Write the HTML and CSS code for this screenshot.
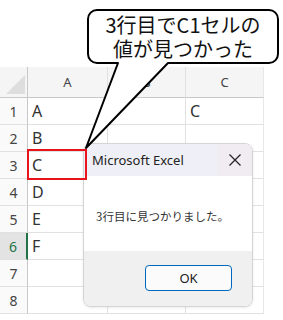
FILE: index.html
```html
<!DOCTYPE html>
<html lang="ja">
<head>
  <meta charset="UTF-8">
  <title>Excel search</title>
  <link rel="stylesheet" href="styles.css">
</head>
<body>
  <!-- Sheet -->
  <div class="sheet">
    <div class="cell corner"><span class="tri"></span></div>
    <div class="cell colh">A</div>
    <div class="cell colh">B</div>
    <div class="cell colh last">C</div>

    <div class="cell rowh">1</div><div class="cell">A</div><div class="cell"></div><div class="cell last">C</div>
    <div class="cell rowh">2</div><div class="cell">B</div><div class="cell"></div><div class="cell last"></div>
    <div class="cell rowh">3</div><div class="cell">C</div><div class="cell"></div><div class="cell last"></div>
    <div class="cell rowh">4</div><div class="cell">D</div><div class="cell"></div><div class="cell last"></div>
    <div class="cell rowh">5</div><div class="cell">E</div><div class="cell"></div><div class="cell last"></div>
    <div class="cell rowh active">6</div><div class="cell">F</div><div class="cell"></div><div class="cell last"></div>
    <div class="cell rowh">7</div><div class="cell"></div><div class="cell"></div><div class="cell last"></div>
    <div class="cell rowh">8</div><div class="cell"></div><div class="cell"></div><div class="cell last"></div>
  </div>

  <!-- Message box -->
  <div class="dialog">
    <div class="dialog-title">
      <span class="dialog-name">Microsoft Excel</span>
      <span class="dialog-close">
        <svg width="14" height="14" viewBox="0 0 14 14"><path d="M1.5 1.5 L12.5 12.5 M12.5 1.5 L1.5 12.5" stroke="#222" stroke-width="1.2" fill="none"/></svg>
      </span>
    </div>
    <div class="dialog-body">3行目に見つかりました。</div>
    <div class="dialog-foot">
      <button class="ok">OK</button>
    </div>
  </div>

  <!-- Found cell marker -->
  <div class="mark"></div>

  <!-- Callout -->
  <svg class="callout-shape" width="283" height="160" viewBox="0 0 283 160">
    <path d="M118 63 L86 148 L168 63 H269 A9 9 0 0 0 278 54 V19 A9 9 0 0 0 269 10 H97 A9 9 0 0 0 88 19 V54 A9 9 0 0 0 97 63 Z"
          fill="#fff" stroke="#000" stroke-width="2" stroke-linejoin="round"/>
  </svg>
  <div class="callout-text">3行目でC1セルの<br>値が見つかった</div>
</body>
</html>
```

FILE: styles.css
```css
body {
  margin: 0;
  padding-top: 67px;
  width: 283px;
  height: 253px;
  overflow: hidden;
  background: #fff;
  font-family: "Noto Sans", "Noto Sans CJK JP", sans-serif;
  color: #333;
}

.sheet {
  display: grid;
  grid-template-columns: 28px 80px 78px 78px;
  grid-template-rows: 31px repeat(8, 27px);
}

.cell {
  box-sizing: border-box;
  border-right: 1px solid #e1e1e1;
  border-bottom: 1px solid #e1e1e1;
  font-size: 16px;
  padding-left: 4px;
  display: flex;
  align-items: center;
}

.cell.last {
  border-right: 1px solid #e8e8e8;
}

.corner {
  background: #f5f5f5;
  border-right: 1px solid #c8c8c8;
  border-bottom: 1px solid #c8c8c8;
  position: relative;
}

.tri {
  position: absolute;
  right: 2px;
  bottom: 3px;
  width: 0;
  height: 0;
  border-left: 19px solid transparent;
  border-bottom: 19px solid #dedede;
}

.colh {
  background: #f5f5f5;
  border-bottom: 1px solid #c8c8c8;
  justify-content: center;
  padding-left: 0;
  font-size: 13px;
  color: #444;
}

.rowh {
  background: #fafafa;
  border-right: 1px solid #c8c8c8;
  justify-content: center;
  padding-left: 0;
  font-size: 14px;
  color: #444;
}

.rowh.active {
  background: #e3e3e3;
  color: #217346;
  border-right: 2px solid #217346;
}

/* message box */
.dialog {
  position: absolute;
  left: 83px;
  top: 143px;
  width: 170px;
  height: 164px;
  box-sizing: border-box;
  border: 1px solid #d4d4d4;
  border-radius: 8px;
  overflow: hidden;
  background: #fff;
  display: flex;
  flex-direction: column;
  box-shadow: 0 1px 3px rgba(0, 0, 0, 0.08);
}

.dialog-title {
  height: 32px;
  flex: none;
  display: flex;
  align-items: center;
  background: #eff0f7;
}

.dialog-name {
  flex: 1;
  padding-left: 8px;
  font-size: 13px;
  color: #222;
}

.dialog-close {
  width: 35px;
  height: 32px;
  display: flex;
  align-items: center;
  justify-content: center;
  background: #f1ecf1;
}

.dialog-body {
  flex: 1;
  padding: 32px 0 0 12px;
  font-size: 11.5px;
  color: #333;
  font-family: "Noto Sans CJK JP", sans-serif;
}

.dialog-foot {
  height: 55px;
  flex: none;
  background: #f0f0f0;
  padding: 14px 0 0 61px;
  box-sizing: border-box;
}

.ok {
  width: 87px;
  height: 26px;
  border: 1px solid #0067c0;
  border-radius: 4px;
  background: #fbfbfb;
  font-family: "Noto Sans", sans-serif;
  font-size: 13px;
  color: #222;
  padding: 0;
}

/* annotation */
.mark {
  position: absolute;
  left: 27px;
  top: 149px;
  width: 60px;
  height: 31px;
  box-sizing: border-box;
  border: 2px solid #e8141b;
}

.callout-shape {
  position: absolute;
  left: 0;
  top: 0;
}

.callout-text {
  position: absolute;
  left: 88px;
  top: 10px;
  width: 190px;
  height: 53px;
  display: flex;
  align-items: center;
  justify-content: center;
  text-align: center;
  font-family: "Noto Sans CJK JP", sans-serif;
  font-size: 20px;
  line-height: 24px;
  color: #111;
}
```
